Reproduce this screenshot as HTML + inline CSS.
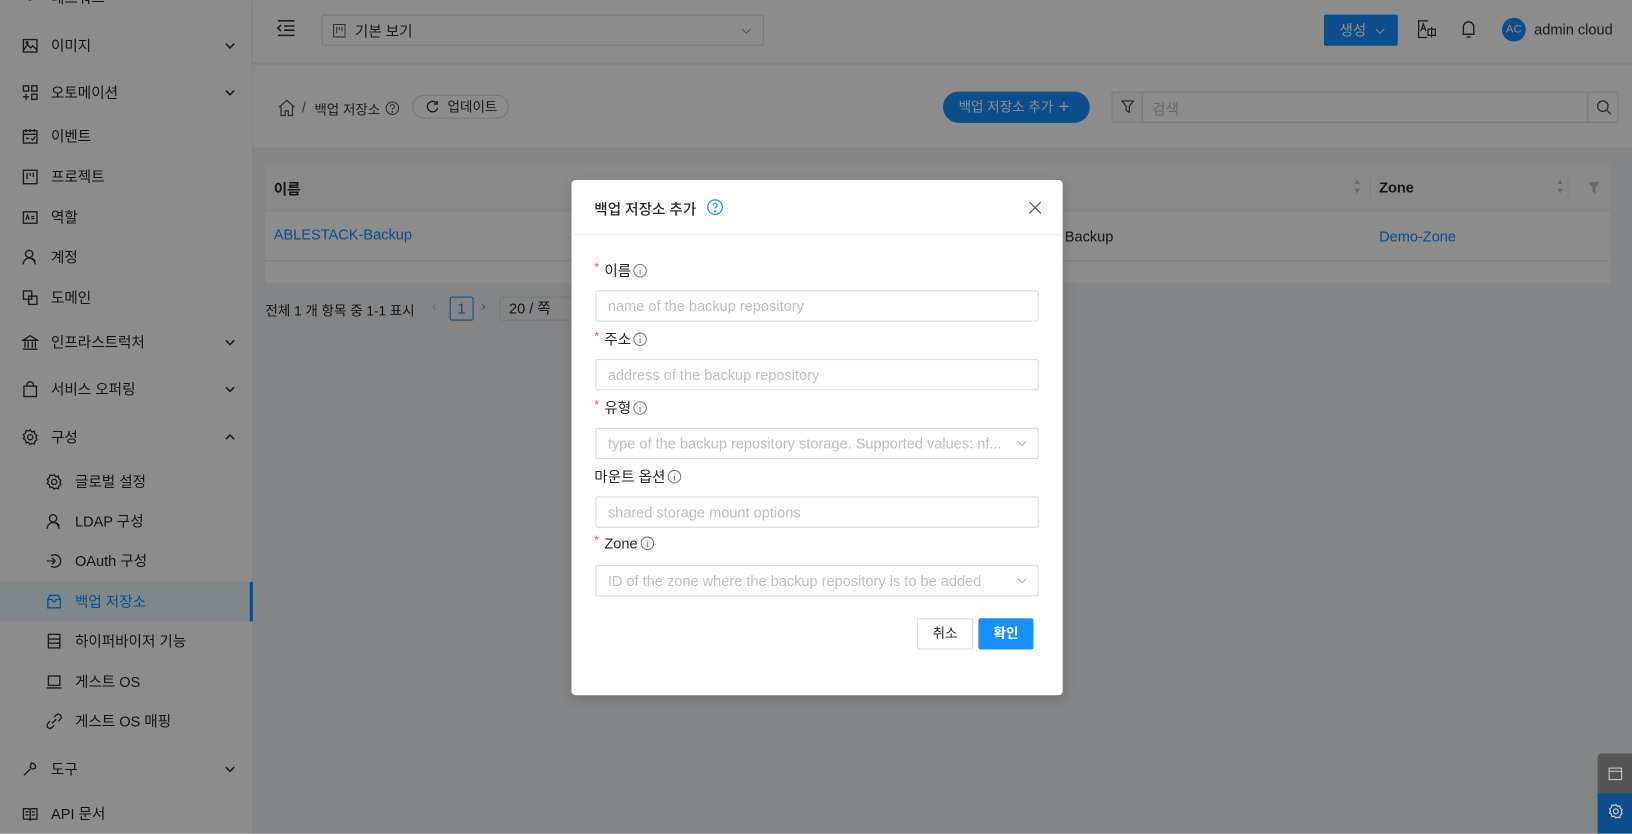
<!DOCTYPE html>
<html><head><meta charset="utf-8">
<style>
*{box-sizing:border-box;margin:0;padding:0}
html,body{width:1632px;height:834px;overflow:hidden;background:#f0f2f5}
body{font-family:"Liberation Sans","Noto Sans CJK KR",sans-serif;font-size:14px;color:rgba(0,0,0,.85)}
#w{position:absolute;left:0;top:0;width:1568px;height:801px;transform:scale(1.040816);transform-origin:0 0;background:#f0f2f5}
.abs{position:absolute}
.sb{left:0;top:0;width:243px;height:801px;background:#fff;border-right:1px solid #eee}
.it{position:absolute;left:0;width:243px;height:38px;display:flex;align-items:center;font-size:14px;color:rgba(0,0,0,.85)}
.it svg{position:absolute;width:16px;height:16px;fill:none;stroke:#333;stroke-width:1.3}
.it .t{position:absolute}
.it .ch{position:absolute;left:215px;width:12px;height:12px}
.hdr{left:243px;top:0;width:1325px;height:60px;background:#fff;box-shadow:0 1px 4px rgba(0,21,41,.08)}
.bc{left:243px;top:62px;width:1325px;height:81px;background:#fff;border-bottom:1px solid #e8e8e8}
.card{left:255px;top:158px;width:1292px;height:114px;background:#fff}
.ov{left:0;top:0;width:1568px;height:801px;background:rgba(0,0,0,.45)}
.modal{left:549px;top:173px;width:472px;height:495px;background:#fff;border-radius:4px;box-shadow:0 4px 12px rgba(0,0,0,.15)}
.lbl{position:absolute;left:22px;font-size:14px;color:rgba(0,0,0,.85);display:flex;align-items:center}
.lbl .r{color:#ff4d4f;font-size:12px;margin-right:5px;position:relative;top:-3px}
.inp{position:absolute;left:23px;width:426px;height:30px;border:1px solid #d9d9d9;border-radius:2px;color:#bfbfbf;font-size:14px;padding-left:11px;line-height:28px;white-space:nowrap;overflow:hidden}
.inp .dd{position:absolute;right:10px;top:9px;width:10px;height:10px}
.info{width:14px;height:14px;margin-left:2px}
</style></head><body><div id="w">

<div class="abs sb">
 <div class="it" style="top:-21px"><svg style="left:21px" viewBox="0 0 16 16"><circle cx="8" cy="8" r="2"/></svg><span class="t" style="left:49px">네트워크</span></div>
 <div class="it" style="top:25px"><svg style="left:21px" viewBox="0 0 16 16"><rect x="1.5" y="2" width="13" height="12"/><path d="M1.5 12l4-5 3 3 2-2 4 4"/><circle cx="5" cy="5" r="1"/></svg><span class="t" style="left:49px">이미지</span><svg class="ch" viewBox="0 0 12 12"><path d="M2 4l4 4 4-4" stroke="#333" stroke-width="1.5" fill="none"/></svg></div>
 <div class="it" style="top:70px"><svg style="left:21px" viewBox="0 0 16 16"><rect x="1.5" y="1.5" width="5" height="5"/><rect x="9.5" y="1.5" width="5" height="5"/><rect x="9.5" y="9.5" width="5" height="5"/><path d="M4 9v6M1 12h6"/></svg><span class="t" style="left:49px">오토메이션</span><svg class="ch" viewBox="0 0 12 12"><path d="M2 4l4 4 4-4" stroke="#333" stroke-width="1.5" fill="none"/></svg></div>
 <div class="it" style="top:112px"><svg style="left:21px" viewBox="0 0 16 16"><rect x="1.5" y="2.5" width="13" height="12"/><path d="M1.5 6h13M4 1v3M8 1v3M12 1v3M4 10h3M9 10l1.5 1.5L13 8"/></svg><span class="t" style="left:49px">이벤트</span></div>
 <div class="it" style="top:151px"><svg style="left:21px" viewBox="0 0 16 16"><rect x="1.5" y="1.5" width="13" height="13"/><path d="M5 4v6M8 4v3M11 4v4"/></svg><span class="t" style="left:49px">프로젝트</span></div>
 <div class="it" style="top:190px"><svg style="left:21px" viewBox="0 0 16 16"><rect x="1.5" y="2.5" width="13" height="11"/><path d="M4 10l1.5-4 1.5 4M9 7h3M9 9h3"/></svg><span class="t" style="left:49px">역할</span></div>
 <div class="it" style="top:228px"><svg style="left:21px" viewBox="0 0 16 16"><circle cx="7" cy="5" r="3.5"/><path d="M1 15c1-4 3-6 6-6s5 2 6 6M10 9l3 3"/></svg><span class="t" style="left:49px">계정</span></div>
 <div class="it" style="top:267px"><svg style="left:21px" viewBox="0 0 16 16"><rect x="1.5" y="1.5" width="8" height="8"/><rect x="6.5" y="6.5" width="8" height="8"/></svg><span class="t" style="left:49px">도메인</span></div>
 <div class="it" style="top:310px"><svg style="left:21px" viewBox="0 0 16 16"><path d="M1 6L8 1.5 15 6zM1 14.5h14M3 7v6M6 7v6M10 7v6M13 7v6"/></svg><span class="t" style="left:49px">인프라스트럭처</span><svg class="ch" viewBox="0 0 12 12"><path d="M2 4l4 4 4-4" stroke="#333" stroke-width="1.5" fill="none"/></svg></div>
 <div class="it" style="top:355px"><svg style="left:21px" viewBox="0 0 16 16"><rect x="2" y="5" width="12" height="10"/><path d="M5 5V3a3 2 0 016 0v2"/></svg><span class="t" style="left:49px">서비스 오퍼링</span><svg class="ch" viewBox="0 0 12 12"><path d="M2 4l4 4 4-4" stroke="#333" stroke-width="1.5" fill="none"/></svg></div>
 <div class="it" style="top:401px"><svg style="left:21px" viewBox="0 0 16 16"><circle cx="8" cy="8" r="2.5"/><path d="M8 1l1.5 2 2.5-.5.5 2.5 2 1.5-1 2 1 2-2 1.5-.5 2.5-2.5-.5L8 15l-1.5-2-2.5.5-.5-2.5-2-1.5 1-2-1-2 2-1.5.5-2.5 2.5.5z"/></svg><span class="t" style="left:49px">구성</span><svg class="ch" viewBox="0 0 12 12"><path d="M2 8l4-4 4 4" stroke="#333" stroke-width="1.5" fill="none"/></svg></div>
 <div class="it" style="top:444px"><svg style="left:44px" viewBox="0 0 16 16"><circle cx="8" cy="8" r="2.5"/><path d="M8 1l1.5 2 2.5-.5.5 2.5 2 1.5-1 2 1 2-2 1.5-.5 2.5-2.5-.5L8 15l-1.5-2-2.5.5-.5-2.5-2-1.5 1-2-1-2 2-1.5.5-2.5 2.5.5z"/></svg><span class="t" style="left:72px">글로벌 설정</span></div>
 <div class="it" style="top:482px"><svg style="left:44px" viewBox="0 0 16 16"><circle cx="7" cy="5" r="3.5"/><path d="M1 15c1-4 3-6 6-6s5 2 6 6M10 9l3 3"/></svg><span class="t" style="left:72px">LDAP 구성</span></div>
 <div class="it" style="top:520px"><svg style="left:44px" viewBox="0 0 16 16"><path d="M5 3a6 6 0 110 10M1 8h8M6 5l3 3-3 3"/></svg><span class="t" style="left:72px">OAuth 구성</span></div>
 <div class="it" style="top:559px;background:#e6f7ff;border-right:3px solid #1890ff;color:#1890ff"><svg style="left:44px;stroke:#1890ff" viewBox="0 0 16 16"><path d="M2 6l2-4h8l2 4v8H2zM2 6h4l1 2h2l1-2h4"/></svg><span class="t" style="left:72px">백업 저장소</span></div>
 <div class="it" style="top:597px"><svg style="left:44px" viewBox="0 0 16 16"><rect x="2.5" y="1.5" width="11" height="13"/><path d="M2.5 6h11M2.5 10h11"/></svg><span class="t" style="left:72px">하이퍼바이저 기능</span></div>
 <div class="it" style="top:636px"><svg style="left:44px" viewBox="0 0 16 16"><rect x="2.5" y="2.5" width="11" height="9"/><path d="M1 14h14"/></svg><span class="t" style="left:72px">게스트 OS</span></div>
 <div class="it" style="top:674px"><svg style="left:44px" viewBox="0 0 16 16"><path d="M6 10l4-4M4 8l-2 2a2.5 2.5 0 004 4l2-2M12 8l2-2a2.5 2.5 0 00-4-4L8 4"/></svg><span class="t" style="left:72px">게스트 OS 매핑</span></div>
 <div class="it" style="top:720px"><svg style="left:21px" viewBox="0 0 16 16"><path d="M2 14l6-6M9 2a4 4 0 014 5l-3 1-2-2 1-3z"/></svg><span class="t" style="left:49px">도구</span><svg class="ch" viewBox="0 0 12 12"><path d="M2 4l4 4 4-4" stroke="#333" stroke-width="1.5" fill="none"/></svg></div>
 <div class="it" style="top:763px"><svg style="left:21px" viewBox="0 0 16 16"><path d="M1.5 3h5.5l1 1 1-1h5.5v10h-5.5l-1 1-1-1H1.5zM8 4v10M3.5 6h3M3.5 9h3M9.5 6h3M9.5 9h3"/></svg><span class="t" style="left:49px">API 문서</span></div>
</div>

<div class="abs hdr">
 <svg class="abs" style="left:23px;top:18px" width="18" height="18" viewBox="0 0 18 18" fill="none" stroke="#333" stroke-width="1.5"><path d="M1 2h16M7 7h10M7 11h10M1 16h16M4 6l-3 3 3 3"/></svg>
 <div class="abs" style="left:66px;top:14px;width:425px;height:30px;border:1px solid #d9d9d9;border-radius:2px">
  <svg class="abs" style="left:10px;top:8px" width="12" height="13" viewBox="0 0 12 13" fill="none" stroke="#555"><rect x=".5" y=".5" width="11" height="12"/><path d="M3.5 3v6M6 3v3M8.5 3v4"/></svg>
  <span class="abs" style="left:31px;top:5px;color:#333">기본 보기</span>
  <svg class="abs" style="left:402px;top:10px" width="10" height="10" viewBox="0 0 10 10"><path d="M1 3l4 4 4-4" stroke="#999" fill="none"/></svg>
 </div>
 <div class="abs" style="left:1029px;top:14px;width:71px;height:30px;background:#1890ff;border-radius:2px;color:#fff;line-height:30px;padding-left:15px">생성<svg class="abs" style="left:49px;top:11px" width="10" height="10" viewBox="0 0 10 10"><path d="M1 3l4 4 4-4" stroke="#fff" fill="none"/></svg></div>
 <svg class="abs" style="left:1119px;top:19px" width="18" height="19" viewBox="0 0 18 19" fill="none" stroke="#333" stroke-width="1.2"><path d="M10 1H1v16h8"/><path d="M3 11l2.5-7 2.5 7M4 8.5h3"/><rect x="10" y="9" width="7" height="6"/><path d="M13.5 7v10"/></svg>
 <svg class="abs" style="left:1161px;top:19px" width="14" height="18" viewBox="0 0 14 18" fill="none" stroke="#333" stroke-width="1.3"><path d="M2 14V7a5 5 0 0110 0v7zM1 14h12M5 16.5h4"/></svg>
 <div class="abs" style="left:1200px;top:17px;width:23px;height:23px;border-radius:50%;background:#1890ff;color:#fff;font-size:11px;line-height:23px;text-align:center">AC</div>
 <span class="abs" style="left:1231px;top:20px;color:#333;font-size:14px">admin cloud</span>
</div>

<div class="abs bc">
 <svg class="abs" style="left:24px;top:33px" width="17" height="17" viewBox="0 0 17 17" fill="none" stroke="#555" stroke-width="1.2"><path d="M1 8L8.5 1.5 16 8M3 6.5V16h4v-4.5h3V16h4V6.5"/></svg>
 <span class="abs" style="left:47px;top:33px;color:#666">/</span>
 <span class="abs" style="left:59px;top:33px;color:#333;font-size:13px">백업 저장소</span>
 <svg class="abs" style="left:127px;top:35px" width="14" height="14" viewBox="0 0 14 14" fill="none" stroke="#555"><circle cx="7" cy="7" r="6"/><path d="M5 5.5a2 2 0 114 0c0 1.3-2 1.5-2 3"/><circle cx="7" cy="10.5" r=".4"/></svg>
 <div class="abs" style="left:153px;top:29px;width:93px;height:23px;border:1px solid #d9d9d9;border-radius:12px;color:#333;font-size:13px;line-height:21px;padding-left:33px">업데이트
  <svg class="abs" style="left:12px;top:4px" width="13" height="13" viewBox="0 0 13 13" fill="none" stroke="#333" stroke-width="1.3"><path d="M11 4A5 5 0 1011.5 7.5M11 1v3H8"/></svg></div>
 <div class="abs" style="left:663px;top:26px;width:141px;height:30px;border-radius:15px;background:#1890ff;color:#fff;font-size:13px;line-height:30px;padding-left:15px">백업 저장소 추가<span class="abs" style="left:111px;top:-1px;font-size:18px">+</span></div>
 <div class="abs" style="left:825px;top:26px;width:487px;height:30px;border:1px solid #d9d9d9;border-radius:2px;background:#fff">
  <div class="abs" style="left:0;top:0;width:29px;height:28px;border-right:1px solid #d9d9d9;background:#fafafa"><svg class="abs" style="left:8px;top:7px" width="13" height="13" viewBox="0 0 13 13" fill="none" stroke="#333"><path d="M1 1h11L8 6v6l-3-2V6z"/></svg></div>
  <span class="abs" style="left:38px;top:6px;color:#bfbfbf">검색</span>
  <div class="abs" style="left:456px;top:0;width:30px;height:28px;border-left:1px solid #d9d9d9"><svg class="abs" style="left:8px;top:7px" width="14" height="14" viewBox="0 0 14 14" fill="none" stroke="#555" stroke-width="1.3"><circle cx="6" cy="6" r="5"/><path d="M9.5 9.5l4 4"/></svg></div>
 </div>
</div>

<div class="abs card">
 <div class="abs" style="left:0;top:0;width:1292px;height:45px;background:#fafafa;border-bottom:1px solid #e8e8e8"></div>
 <span class="abs" style="left:8px;top:14px;font-weight:bold;font-size:14px">이름</span>
 <div class="abs" style="left:1061px;top:12px;width:1px;height:22px;background:#e8e8e8"></div>
 <div class="abs" style="left:1251px;top:12px;width:1px;height:22px;background:#e8e8e8"></div>
 <span class="abs" style="left:1045px;top:12px;color:#bfbfbf;font-size:8px;line-height:9px">▲<br>▼</span>
 <span class="abs" style="left:1070px;top:14px;font-weight:bold">Zone</span>
 <span class="abs" style="left:1240px;top:12px;color:#bfbfbf;font-size:8px;line-height:9px">▲<br>▼</span>
 <svg class="abs" style="left:1271px;top:17px" width="11" height="11" viewBox="0 0 11 11"><path d="M0 0h11L7 5v6L4 9V5z" fill="#bfbfbf"/></svg>
 <div class="abs" style="left:0;top:92px;width:1292px;height:1px;background:#e8e8e8"></div>
 <span class="abs" style="left:8px;top:59px;color:#1890ff">ABLESTACK-Backup</span>
 <span class="abs" style="left:768px;top:61px">Backup</span>
 <span class="abs" style="left:1070px;top:61px;color:#1890ff">Demo-Zone</span>
</div>

<span class="abs" style="left:255px;top:288px;font-size:13px">전체 1 개 항목 중 1-1 표시</span>
<span class="abs" style="left:415px;top:286px;color:#bfbfbf">‹</span>
<div class="abs" style="left:432px;top:285px;width:23px;height:23px;border:1px solid #1890ff;border-radius:2px;color:#1890ff;text-align:center;line-height:21px;font-size:14px">1</div>
<span class="abs" style="left:462px;top:286px;color:#999">›</span>
<div class="abs" style="left:480px;top:285px;width:70px;height:23px;border:1px solid #d9d9d9;border-radius:2px;padding-left:8px;line-height:21px;font-size:14px">20 / 쪽</div>

<div class="abs" style="left:1535px;top:724px;width:33px;height:38px;background:#999;border-radius:4px 0 0 0"></div>
<div class="abs" style="left:1535px;top:762px;width:33px;height:39px;background:#1890ff"></div>

<div class="abs ov"></div>
<svg class="abs" style="left:1545px;top:736px" width="14" height="14" viewBox="0 0 14 14" fill="none" stroke="#ccc"><rect x="1" y="2" width="12" height="11"/><path d="M1 5h12"/></svg>
<svg class="abs" style="left:1545px;top:772px" width="15" height="15" viewBox="0 0 16 16" fill="none" stroke="#ccc" stroke-width="1.2"><circle cx="8" cy="8" r="2.5"/><path d="M8 1l1.5 2 2.5-.5.5 2.5 2 1.5-1 2 1 2-2 1.5-.5 2.5-2.5-.5L8 15l-1.5-2-2.5.5-.5-2.5-2-1.5 1-2-1-2 2-1.5.5-2.5 2.5.5z"/></svg>

<div class="abs modal">
 <div class="abs" style="left:0;top:0;width:472px;height:53px;border-bottom:1px solid #f0f0f0"></div>
 <span class="abs" style="left:22px;top:18px;font-size:14px;font-weight:500;color:rgba(0,0,0,.85)">백업 저장소 추가</span>
 <svg class="abs" style="left:130px;top:18px" width="16" height="16" viewBox="0 0 16 16" fill="none" stroke="#1890ff" stroke-width="1.2"><circle cx="8" cy="8" r="7"/><path d="M6 6.3a2 2 0 114 0c0 1.4-2 1.6-2 3.2"/><circle cx="8" cy="12" r=".5"/></svg>
 <svg class="abs" style="left:439px;top:20px" width="13" height="13" viewBox="0 0 13 13" stroke="#666" stroke-width="1.3"><path d="M1 1l11 11M12 1L1 12"/></svg>

 <div class="lbl" style="top:77px"><span class="r">*</span>이름<svg class="info" viewBox="0 0 14 14" fill="none" stroke="#777"><circle cx="7" cy="7" r="6"/><path d="M7 6v4.5M7 3.8v.6"/></svg></div>
 <div class="inp" style="top:106px">name of the backup repository</div>
 <div class="lbl" style="top:143px"><span class="r">*</span>주소<svg class="info" viewBox="0 0 14 14" fill="none" stroke="#777"><circle cx="7" cy="7" r="6"/><path d="M7 6v4.5M7 3.8v.6"/></svg></div>
 <div class="inp" style="top:172px">address of the backup repository</div>
 <div class="lbl" style="top:209px"><span class="r">*</span>유형<svg class="info" viewBox="0 0 14 14" fill="none" stroke="#777"><circle cx="7" cy="7" r="6"/><path d="M7 6v4.5M7 3.8v.6"/></svg></div>
 <div class="inp" style="top:238px">type of the backup repository storage. Supported values: nf...<svg class="dd" viewBox="0 0 10 10"><path d="M1 3l4 4 4-4" stroke="#aaa" fill="none"/></svg></div>
 <div class="lbl" style="top:275px">마운트 옵션<svg class="info" viewBox="0 0 14 14" fill="none" stroke="#777"><circle cx="7" cy="7" r="6"/><path d="M7 6v4.5M7 3.8v.6"/></svg></div>
 <div class="inp" style="top:304px">shared storage mount options</div>
 <div class="lbl" style="top:341px"><span class="r">*</span>Zone<svg class="info" viewBox="0 0 14 14" fill="none" stroke="#777"><circle cx="7" cy="7" r="6"/><path d="M7 6v4.5M7 3.8v.6"/></svg></div>
 <div class="inp" style="top:370px">ID of the zone where the backup repository is to be added<svg class="dd" viewBox="0 0 10 10"><path d="M1 3l4 4 4-4" stroke="#aaa" fill="none"/></svg></div>

 <div class="abs" style="left:332px;top:421px;width:54px;height:30px;border:1px solid #d9d9d9;border-radius:2px;text-align:center;line-height:28px;font-size:13px">취소</div>
 <div class="abs" style="left:391px;top:421px;width:53px;height:30px;background:#1890ff;border-radius:2px;text-align:center;line-height:30px;font-size:13px;color:#fff;font-weight:bold">확인</div>
</div>

</div></body></html>
